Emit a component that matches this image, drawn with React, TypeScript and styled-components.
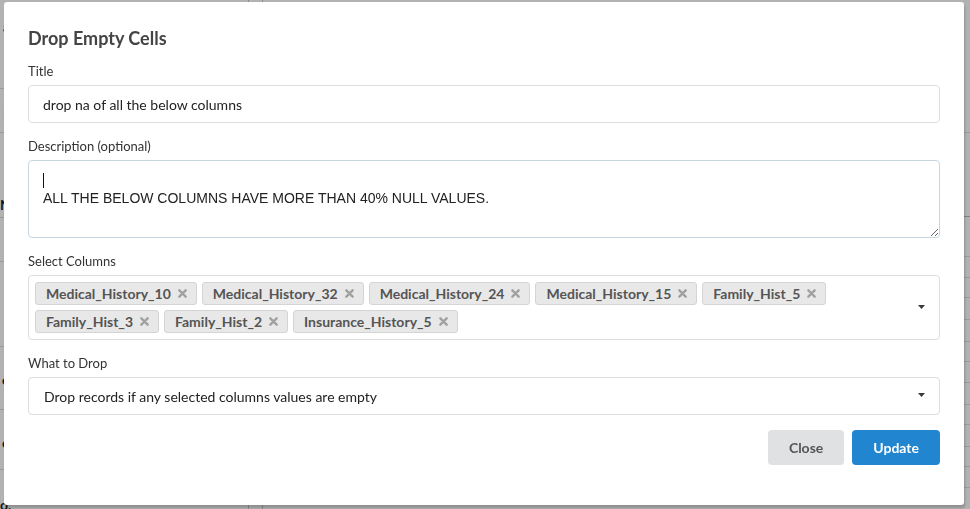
import { useState } from 'react'
import styled, { createGlobalStyle } from 'styled-components'

const GlobalStyle = createGlobalStyle`
    html, body {
        margin: 0;
        padding: 0;
        height: 100%;
        overflow: hidden;
    }
    body {
        font-family: Lato, "Helvetica Neue", Arial, sans-serif;
        background: #fff;
    }
`

const columns = [
    'Medical_History_10',
    'Medical_History_32',
    'Medical_History_24',
    'Medical_History_15',
    'Family_Hist_5',
    'Family_Hist_3',
    'Family_Hist_2',
    'Insurance_History_5',
]

// rows of the page behind the dimmer, only their edges show
const leftRows = [
    { h: 89, pt: 18, t: 'a' },
    { h: 44, pt: 12, t: 's' },
    { h: 85, pt: 63, t: 'N' },
    { h: 44, pt: 0, t: '' },
    { h: 85, pt: 0, t: '' },
    { h: 63, pt: 24, t: 'o' },
    { h: 60, pt: 24, t: 'o' },
    { h: 60, pt: 26, t: 'o,' },
]

const rightRows = [133, 84, 40, 21, 20, 22, 22, 20, 21, 22, 20, 22, 20, 21]

const Caret = () => (
    <svg width="7" height="4" viewBox="0 0 7 4">
        <path d="M0 0 H7 L3.5 4 Z" fill="#3a3a3a" />
    </svg>
)

const DeleteIcon = () => (
    <svg width="9" height="9" viewBox="0 0 10 10">
        <path d="M1.5 1.5 L8.5 8.5 M8.5 1.5 L1.5 8.5" stroke="#a0a0a0" strokeWidth="2.6" strokeLinecap="round" />
    </svg>
)

const App = () => {
    const [title, setTitle] = useState('drop na of all the below columns')
    const [desc, setDesc] = useState('\nALL THE BELOW COLUMNS HAVE MORE THAN 40% NULL VALUES.')

    return (
        <>
            <GlobalStyle />
            <Page>
                <LeftPanel>
                    {leftRows.map((r, i) => (
                        <LeftRow key={i} $h={r.h} $pt={r.pt}>{r.t}</LeftRow>
                    ))}
                </LeftPanel>
                <Divider />
                <RightPanel>
                    {rightRows.map((h, i) => (
                        <TableRow key={i} $h={h} $strong={i === 1} />
                    ))}
                </RightPanel>
            </Page>

            <Dimmer>
                <Modal>
                    <Header>Drop Empty Cells</Header>

                    <Field>
                        <Label>Title</Label>
                        <Input value={title} onChange={e => setTitle(e.target.value)} />
                    </Field>

                    <Field>
                        <Label>Description (optional)</Label>
                        <TextAreaWrap>
                            <TextArea value={desc} onChange={e => setDesc(e.target.value)} />
                            <TextCaret />
                        </TextAreaWrap>
                    </Field>

                    <Field>
                        <Label>Select Columns</Label>
                        <MultiSelect>
                            <Chips>
                                {columns.map(c => (
                                    <Chip key={c}>
                                        {c}
                                        <DeleteIcon />
                                    </Chip>
                                ))}
                            </Chips>
                            <DropIcon><Caret /></DropIcon>
                        </MultiSelect>
                    </Field>

                    <Field>
                        <Label>What to Drop</Label>
                        <Select>
                            <span>Drop records if any selected columns values are empty</span>
                            <DropIcon><Caret /></DropIcon>
                        </Select>
                    </Field>

                    <Actions>
                        <Button>Close</Button>
                        <Button $primary>Update</Button>
                    </Actions>
                </Modal>
            </Dimmer>
        </>
    )
}

export default App

const Page = styled.div`
    display: flex;
    height: 100vh;
    font-family: Lato, sans-serif;
    font-weight: 700;
    font-size: 14px;
    color: #222;
`

const LeftPanel = styled.div`
    width: 248px;
    display: flex;
    flex-direction: column;
`

const LeftRow = styled.div<{ $h: number; $pt: number }>`
    height: ${p => p.$h}px;
    flex: none;
    box-sizing: border-box;
    border-bottom: 1px solid #ddd;
    padding: ${p => p.$pt}px 238px 0 0;
    line-height: 17px;
    text-align: right;
`

const Divider = styled.div`
    width: 15px;
    border-left: 1px solid #ccc;
    border-right: 1px solid #ccc;
    box-sizing: border-box;
`

const RightPanel = styled.div`
    flex: 1;
    display: flex;
    flex-direction: column;
`

const TableRow = styled.div<{ $h: number; $strong?: boolean }>`
    height: ${p => p.$h}px;
    flex: none;
    box-sizing: border-box;
    border-bottom: 1px solid ${p => (p.$strong ? '#bbb' : '#ddd')};
`

const Dimmer = styled.div`
    position: fixed;
    inset: 0;
    background: rgba(0, 0, 0, 0.3);
    display: flex;
    padding: 2px 6px 4px 4px;
`

const Modal = styled.div`
    flex: 1;
    background: #fff;
    border-radius: 3px;
    box-shadow: 1px 3px 3px 0 rgba(0, 0, 0, 0.2);
    padding: 24px 24px 0 24px;
    display: flex;
    flex-direction: column;
    font-family: Lato, "Helvetica Neue", Arial, sans-serif;
`

const Header = styled.h2`
    margin: 0 0 13px;
    font-size: 18px;
    font-weight: 700;
    color: #444;
    line-height: 24px;
`

const Field = styled.div`
    display: flex;
    flex-direction: column;
    margin-bottom: 15px;
`

const Label = styled.label`
    font-size: 13px;
    color: #333;
    line-height: 17px;
    margin-bottom: 5px;
`

const Input = styled.input`
    height: 38px;
    box-sizing: border-box;
    border: 1px solid #ddd;
    border-radius: 4px;
    padding: 0 14px;
    font-family: Lato, sans-serif;
    font-size: 14px;
    color: #222;
    outline: none;
`

const TextAreaWrap = styled.div`
    position: relative;
    display: flex;
    flex-direction: column;
`

const TextArea = styled.textarea`
    height: 78px;
    box-sizing: border-box;
    border: 1px solid #c6d6e1;
    border-radius: 4px;
    padding: 10px 14px;
    font-family: "Liberation Sans", Arial, sans-serif;
    font-size: 14px;
    line-height: 18px;
    color: #222;
    outline: none;
    resize: vertical;
`

const TextCaret = styled.span`
    position: absolute;
    left: 15px;
    top: 13px;
    width: 1px;
    height: 15px;
    background: #111;
`

const MultiSelect = styled.div`
    min-height: 65px;
    box-sizing: border-box;
    border: 1px solid #ddd;
    border-radius: 4px;
    padding: 6px 40px 6px 6px;
    position: relative;
`

const Chips = styled.div`
    display: flex;
    flex-wrap: wrap;
    gap: 5px 5px;
`

const Chip = styled.span`
    display: inline-flex;
    align-items: center;
    gap: 7px;
    height: 23px;
    box-sizing: border-box;
    padding: 0 9px 0 10px;
    background: #e8e8e8;
    border: 1px solid #d4d4d4;
    border-radius: 3px;
    font-size: 14px;
    font-weight: 700;
    color: #555;
`

const DropIcon = styled.span`
    position: absolute;
    right: 14px;
    top: 50%;
    margin-top: -3px;
    display: flex;
    line-height: 0;
`

const Select = styled.div`
    position: relative;
    height: 38px;
    box-sizing: border-box;
    border: 1px solid #ddd;
    border-radius: 4px;
    padding: 0 40px 0 15px;
    display: flex;
    align-items: center;
    font-size: 14px;
    color: #222;
`

const Actions = styled.div`
    display: flex;
    justify-content: flex-end;
    gap: 8px;
`

const Button = styled.button<{ $primary?: boolean }>`
    height: 35px;
    padding: 0 21px;
    border: none;
    border-radius: 4px;
    font-family: Lato, sans-serif;
    font-size: 14px;
    font-weight: 700;
    background: ${p => (p.$primary ? '#2185d0' : '#e0e1e2')};
    color: ${p => (p.$primary ? '#fff' : '#555')};
    cursor: pointer;
`
